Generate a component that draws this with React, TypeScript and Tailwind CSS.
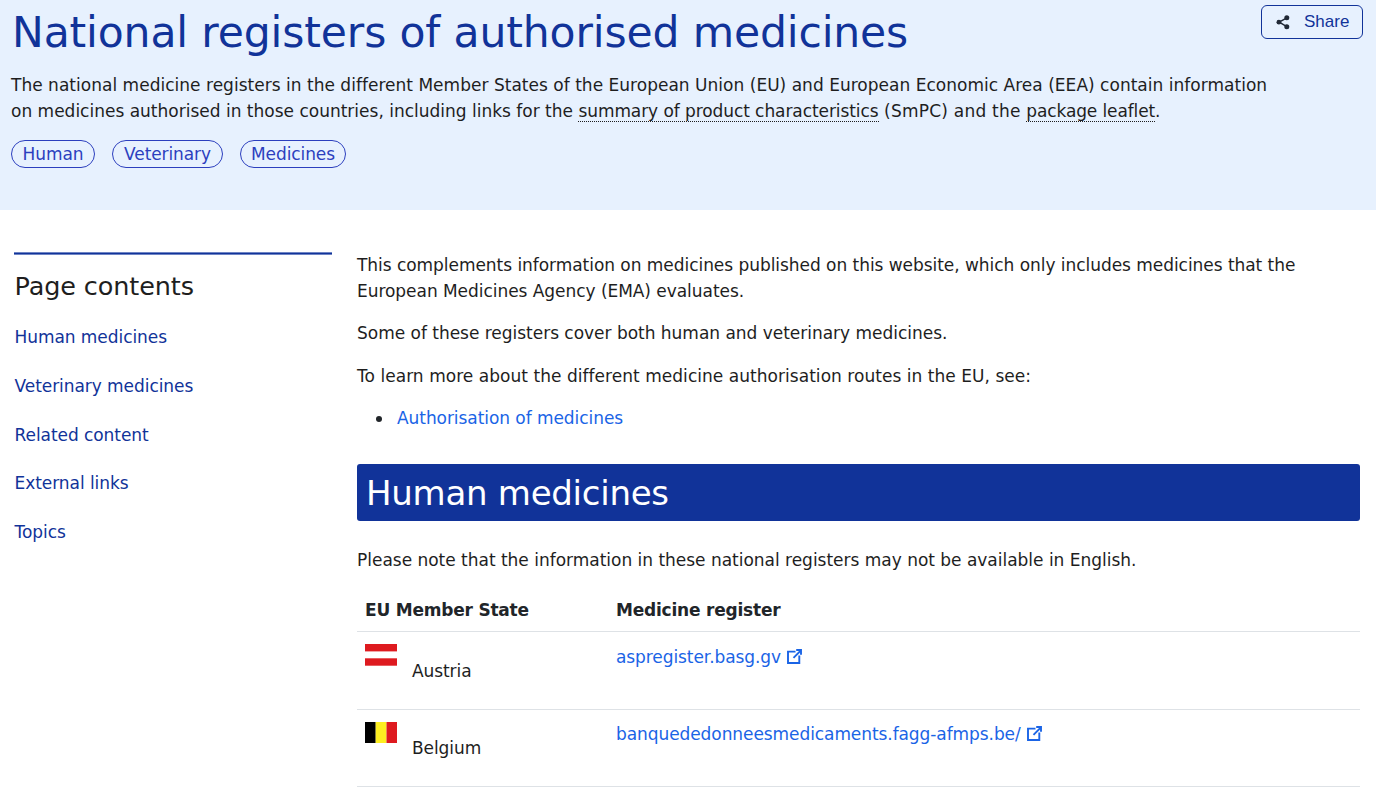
import React from 'react';

const tags = [
    { label: 'Human', width: 'w-[84px]' },
    { label: 'Veterinary', width: 'w-[111px]' },
    { label: 'Medicines', width: 'w-[106px]' },
];

const contents = ['Human medicines', 'Veterinary medicines', 'Related content', 'External links', 'Topics'];

const ShareIcon = () => (
    <svg width="14" height="15" viewBox="0 0 14 15" fill="#212936">
        <path d="M3.2 7.2 10.8 2.8M3.2 7.2l7.6 4.5" stroke="#212936" strokeWidth="1.5" />
        <circle cx="2.9" cy="7.2" r="2.4" />
        <circle cx="10.8" cy="2.8" r="2.5" />
        <circle cx="10.8" cy="11.7" r="2.5" />
    </svg>
);

const ExternalIcon = () => (
    <svg className="inline-block ml-[6px] align-[-1px]" width="15" height="15" viewBox="0 0 15 15" fill="none" stroke="currentColor">
        <path d="M8.5 2.6H1V14H12.3V6.5" strokeWidth="1.9" />
        <path d="M6.5 8.8 13.4 1.8" strokeWidth="1.9" />
        <path d="M9.2 1H14V5.8" strokeWidth="1.9" />
    </svg>
);

const AustriaFlag = () => (
    <svg width="32" height="22" viewBox="0 0 32 22">
        <rect width="32" height="22" fill="#fff" />
        <rect width="32" height="7.4" fill="#de1a1f" />
        <rect y="14.3" width="32" height="7.4" fill="#de1a1f" />
    </svg>
);

const BelgiumFlag = () => (
    <svg width="32" height="21" viewBox="0 0 32 21">
        <rect width="10.7" height="21" fill="#000" />
        <rect x="10.7" width="10.8" height="21" fill="#fdee21" />
        <rect x="21.5" width="10.5" height="21" fill="#de1a1f" />
    </svg>
);

const registers = [
    {
        country: 'Austria',
        flag: <AustriaFlag />,
        link: 'aspregister.basg.gv',
        height: 'h-[78px]',
        nameOffset: 'mt-[15px]',
        linkOffset: 'pt-[13px]',
    },
    {
        country: 'Belgium',
        flag: <BelgiumFlag />,
        link: 'banquededonneesmedicaments.fagg-afmps.be/',
        height: 'h-[77px]',
        nameOffset: 'mt-[14px]',
        linkOffset: 'pt-[12px]',
    },
];

const Header: React.FC = () => (
    <header className="h-[210px] bg-[#e7f1fe] pl-[11px] pr-[13px]">
        <div className="flex items-start justify-between pt-[5px]">
            <h1 className="h-[68px] pl-[1px] text-[42.5px] leading-[55px] tracking-[-0.14px] text-[#113399]">
                National registers of authorised medicines
            </h1>
            <button className="flex h-[34px] w-[102px] items-center rounded-[6px] border border-[#113399] pl-[14px] font-['Liberation_Sans',sans-serif] text-[17px] text-[#113399]">
                <ShareIcon />
                <span className="ml-[14px]">Share</span>
            </button>
        </div>
        <p className="leading-[25.5px]">
            <span className="tracking-[0.02px]">
                The national medicine registers in the different Member States of the European Union (EU) and European Economic Area (EEA) contain information
            </span>
            <br />
            on medicines authorised in those countries, including links for the{' '}
            <span className="border-b border-dotted border-[#1e1e1e] tracking-[-0.08px]">summary of product characteristics</span>
            <span className="tracking-[0.22px]"> (SmPC) and the </span>
            <span className="border-b border-dotted border-[#1e1e1e] tracking-[-0.12px]">package leaflet</span>.
        </p>
        <div className="mt-[16px] flex gap-[17px]">
            {tags.map(({ label, width }) => (
                <span key={label} className={`flex h-[28px] items-center justify-center rounded-full border border-[#2c3fbe] pt-[2px] tracking-[-0.1px] text-[#2c3fbe] ${width}`}>
                    {label}
                </span>
            ))}
        </div>
    </header>
);

const Sidebar: React.FC = () => (
    <nav className="w-[318px] shrink-0 text-[#113399]">
        <div className="mt-[42px] h-[3px] border-y border-[#6e84c4] bg-[#113399]" />
        <h2 className="mt-[15px] pl-[0.5px] text-[25.5px] leading-[32px] tracking-[-0.1px] text-[#1e1e1e]">Page contents</h2>
        <ul className="mt-[11px] pl-[0.5px]">
            {contents.map((item) => (
                <li key={item} className="h-[48.75px] leading-[48.75px] tracking-[-0.06px]">
                    <a href="#">{item}</a>
                </li>
            ))}
        </ul>
    </nav>
);

export default function App() {
    return (
        <div className="h-[800px] w-[1376px] overflow-hidden bg-white font-['DejaVu_Sans',sans-serif] text-[17px] leading-[25.5px] whitespace-nowrap text-[#1e1e1e]">
            <Header />
            <div className="flex pl-[14px]">
                <Sidebar />
                <main className="ml-[25px] w-[1003px] pt-[43px]">
                    <p className="mb-[17px] tracking-[-0.045px]">
                        This complements information on medicines published on this website, which only includes medicines that the
                        <br />
                        European Medicines Agency (EMA) evaluates.
                    </p>
                    <p className="mb-[17px] tracking-[-0.02px]">Some of these registers cover both human and veterinary medicines.</p>
                    <p className="mb-[17px] tracking-[0.04px]">To learn more about the different medicine authorisation routes in the EU, see:</p>
                    <ul className="flex items-center pl-[19px]">
                        <li className="flex items-center">
                            <span className="mr-[15px] h-[6px] w-[6px] rounded-full bg-[#212529]" />
                            <a href="#" className="tracking-[-0.06px] text-[#1a64e6]">Authorisation of medicines</a>
                        </li>
                    </ul>
                    <h2 className="mt-[32px] flex h-[57px] items-center rounded-[3px] bg-[#113399] pt-[3px] pl-[9px] text-[34px] tracking-[-0.27px] text-white">
                        <span>Human medicines</span>
                    </h2>
                    <p className="mt-[27px] tracking-[-0.015px]">Please note that the information in these national registers may not be available in English.</p>

                    <table className="mt-[15px] w-full table-fixed border-collapse">
                        <thead>
                            <tr className="h-[43px] border-b border-[#dee2e6] text-left align-middle tracking-[-0.21px] text-[#212529]">
                                <th className="w-[251px] pt-[3px] pl-[8px]"><span>EU Member State</span></th>
                                <th className="pt-[3px] pl-[8px]"><span>Medicine register</span></th>
                            </tr>
                        </thead>
                        <tbody>
                            {registers.map(({ country, flag, link, height, nameOffset, linkOffset }) => (
                                <tr key={country} className={`border-b border-[#dee2e6] align-top tracking-[-0.08px] ${height}`}>
                                    <td className="pt-[12px] pl-[8px]">
                                        <div className="flex">
                                            {flag}
                                            <span className={`ml-[15px] ${nameOffset}`}>{country}</span>
                                        </div>
                                    </td>
                                    <td className={`pl-[8px] text-[#1a64e6] ${linkOffset}`}>
                                        <a href="#">{link}<ExternalIcon /></a>
                                    </td>
                                </tr>
                            ))}
                        </tbody>
                    </table>
                </main>
            </div>
        </div>
    );
}
